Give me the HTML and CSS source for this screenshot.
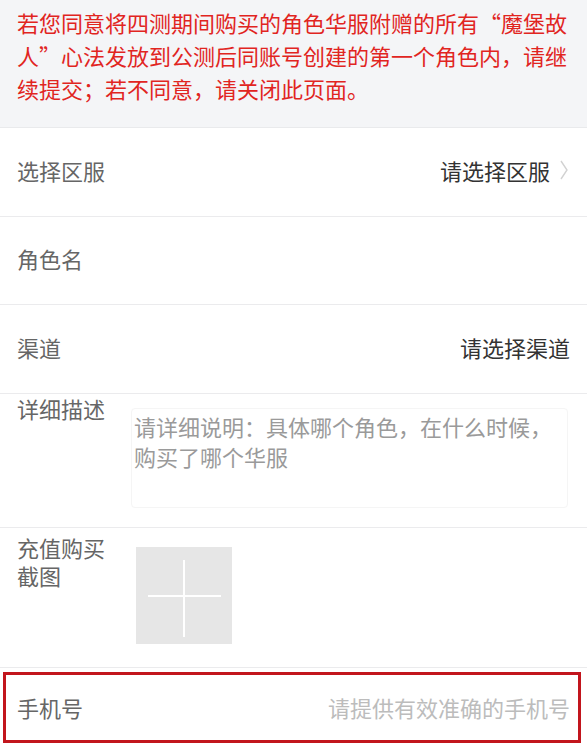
FILE: index.html
```html
<!DOCTYPE html>
<html lang="zh-CN">
<head>
  <meta charset="UTF-8">
  <title>华服补偿申请</title>
  <link rel="stylesheet" href="styles.css">
</head>
<body>
  <div class="notice">
    若您同意将四测期间购买的角色华服附赠的所有“魔堡故人”心法发放到公测后同账号创建的第一个角色内，请继续提交；若不同意，请关闭此页面。
  </div>

  <form class="form">
    <div class="row">
      <span class="label">选择区服</span>
      <span class="value">请选择区服</span>
      <svg class="arrow" width="8" height="20" viewBox="0 0 8 20">
        <path d="M1 1 L7 10 L1 19" fill="none" stroke="#d2d2d2" stroke-width="1.4"/>
      </svg>
    </div>
    <div class="row">
      <span class="label">角色名</span>
    </div>
    <div class="row">
      <span class="label">渠道</span>
      <span class="value">请选择渠道</span>
    </div>
    <div class="row row-top">
      <span class="label">详细描述</span>
      <div class="textarea">请详细说明：具体哪个角色，在什么时候，购买了哪个华服</div>
    </div>
    <div class="row row-top row-upload">
      <span class="label label-wrap">充值购买截图</span>
      <div class="upload">
        <span class="plus-h"></span>
        <span class="plus-v"></span>
      </div>
    </div>
    <div class="row row-phone">
      <span class="label">手机号</span>
      <span class="placeholder">请提供有效准确的手机号</span>
    </div>
  </form>
</body>
</html>
```

FILE: styles.css
```css
body {
  margin: 0;
  background: #fff;
  font-family: 'Noto Sans CJK SC', 'Noto Sans', sans-serif;
  font-size: 22px;
}
.notice {
  background: #f4f5f7;
  color: #e1251f;
  line-height: 33px;
  padding: 6px 14px 22px 17px;
  border-bottom: 1px solid #e9eaec;
}
.row {
  display: flex;
  align-items: center;
  height: 83.5px;
  padding: 0 17px 4px;
  border-bottom: 1px solid #ebebed;
}
.label {
  color: #666;
  flex: 0 0 100px;
}
.value {
  margin-left: auto;
  color: #333;
}
.arrow {
  margin: 0 2px 0 10px;
}
.row-top {
  align-items: flex-start;
  height: auto;
  padding-top: 0;
  padding-bottom: 19px;
}
.row-top .label {
  line-height: 28px;
}
.textarea {
  flex: 1;
  margin: 14px 2px 0 14px;
  height: 96px;
  padding: 2px 2px 0 2px;
  border: 1px solid #f5f5f5;
  border-radius: 4px;
  color: #9a9a9a;
  line-height: 30px;
}
.row-upload {
  padding-top: 5px;
  padding-bottom: 23px;
}
.label-wrap {
  flex: 0 0 90px;
  line-height: 27px;
}
.upload {
  position: relative;
  width: 96px;
  height: 97px;
  margin-top: 14px;
  margin-left: 29px;
  background: #e6e6e6;
}
.plus-h {
  position: absolute;
  left: 12px;
  right: 11px;
  top: 48px;
  height: 2px;
  background: #fff;
}
.plus-v {
  position: absolute;
  top: 13px;
  bottom: 7px;
  left: 47px;
  width: 2px;
  background: #fff;
}
.row-phone {
  height: 65px;
  margin: 4px 6px 0 3px;
  padding: 0 8px 0 11px;
  border: 3px solid #c2151d;
}
.placeholder {
  margin-left: auto;
  color: #bcbcbc;
}
```
